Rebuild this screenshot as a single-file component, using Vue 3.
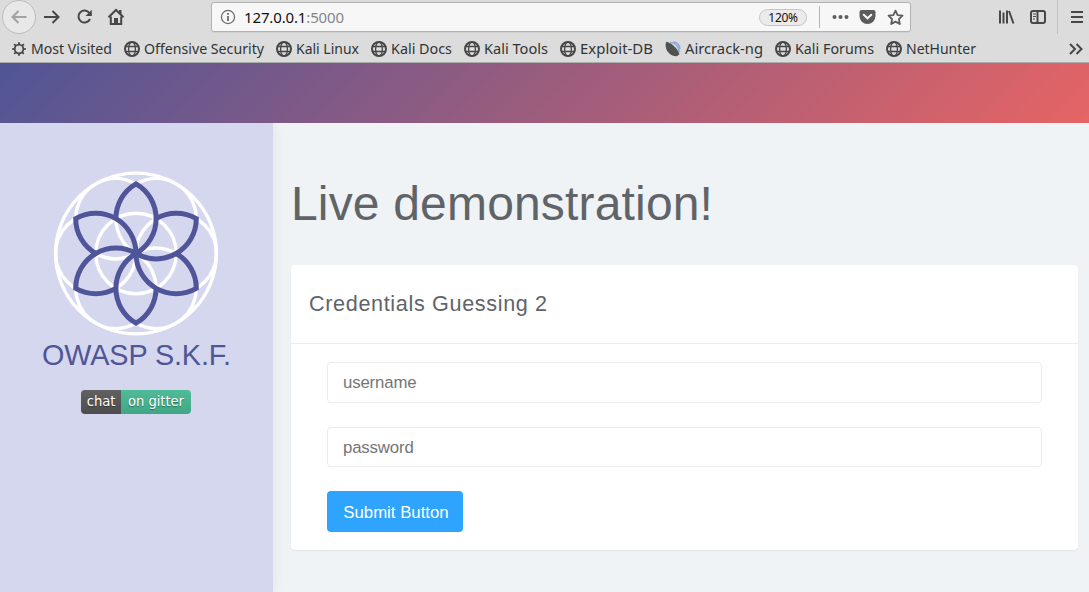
<script setup>
const bookmarks = [
  { label: 'Most Visited', icon: 'gear', width: 113, text: 81 },
  { label: 'Offensive Security', icon: 'globe', width: 152, text: 120 },
  { label: 'Kali Linux', icon: 'globe', width: 95, text: 63 },
  { label: 'Kali Docs', icon: 'globe', width: 93, text: 61 },
  { label: 'Kali Tools', icon: 'globe', width: 96, text: 64 },
  { label: 'Exploit-DB', icon: 'globe', width: 105, text: 73 },
  { label: 'Aircrack-ng', icon: 'dish', width: 110, text: 78 },
  { label: 'Kali Forums', icon: 'globe', width: 111, text: 79 },
  { label: 'NetHunter', icon: 'globe', width: 102, text: 70 },
]
const angles = [0, 60, 120, 180, 240, 300]
const teeth = [0, 45, 90, 135, 180, 225, 270, 315]
</script>

<template>
  <div class="window">
    <header class="chrome">
      <div class="toolbar">
        <div class="nav">
          <span class="back"><svg width="18" height="16" viewBox="0 0 18 16"><path d="M16.500 8H2.500M8.500 2 2.500 8l6 6" /></svg></span>
          <svg class="forward" width="18" height="16" viewBox="0 0 18 16"><path d="M0 8h14M8.500 2l6 6-6 6" /></svg>
          <svg class="reload" width="16" height="16" viewBox="0 0 16 16"><path d="M12.500 4.200A6 6 0 1 0 13 10" /><path class="solid" d="M14.800.8V7H8.500z" /></svg>
          <svg class="home" width="18" height="18" viewBox="0 0 18 18"><path d="M1.500 9.200 9 2l7.500 7.200M3.800 8.500V16h10.400V8.500" /><path class="solid" d="M7 10h4v6H7zM12 2h2.500v5L12 5z" /></svg>
        </div>
        <div class="address">
          <svg class="info" width="16" height="16" viewBox="0 0 16 16"><circle cx="8" cy="8" r="6.600" /><path d="M8 7v5M8 4v1.800" /></svg>
          <span class="url">127.0.0.1<span class="port">:5000</span></span>
          <span class="zoom">120%</span>
          <span class="rule"></span>
          <svg class="dots" width="17" height="6" viewBox="0 0 17 6"><circle cx="2.500" cy="3" r="2" /><circle cx="8.500" cy="3" r="2" /><circle cx="14.500" cy="3" r="2" /></svg>
          <svg class="pocket" width="17" height="16" viewBox="0 0 17 16"><path class="shape" d="M2.500 1h12a2 2 0 0 1 2 2v4a8 8 0 0 1-16 0V3a2 2 0 0 1 2-2z" /><path class="tick" d="m4.700 5.700 3.800 3.600 3.800-3.600" /></svg>
          <svg class="star" width="17" height="17" viewBox="0 0 17 17"><path d="m8.500 1.600 2.100 4.500 4.900.6-3.600 3.400.9 4.900-4.300-2.400L4.200 15l.9-4.900L1.500 6.700l4.900-.6z" /></svg>
        </div>
        <div class="tools">
          <svg class="library" width="17" height="16" viewBox="0 0 17 16"><path d="M2 1.500v13M5.500 3.500v11M9 1.500v13M11 2l4.500 12.500" /></svg>
          <svg class="sidebar-icon" width="16" height="14" viewBox="0 0 16 14"><rect x="1" y="1" width="14" height="12" rx="2" /><path d="M7.500 1v12" /><path class="thin" d="M3 4h3M3 6.500h3M3 9h2" /></svg>
          <span class="divider"></span>
          <svg class="menu" width="14" height="14" viewBox="0 0 14 14"><path d="M1 2h12M1 7h12M1 12h12" /></svg>
        </div>
      </div>
      <nav class="bookmarks">
        <a v-for="b in bookmarks" :key="b.label" :style="{ width: b.width + 'px' }">
          <svg class="mark" width="16" height="16" viewBox="0 0 16 16">
            <g v-if="b.icon === 'globe'" class="globe"><circle cx="8" cy="8" r="7" /><ellipse cx="8" cy="8" rx="3.400" ry="7" /><path d="M1.800 5.500h12.400M1.800 10.500h12.400" /></g>
            <g v-else-if="b.icon === 'gear'" class="gear"><circle cx="8" cy="8" r="4.300" /><path v-for="t in teeth" :key="t" d="M8 3.500V1.200" :transform="`rotate(${t} 8 8)`" /></g>
            <g v-else><path class="beam" d="M5 1.200c5 .3 9 4 9.500 10M8.500.8c3.500.7 6 3.200 6.500 7" /><path class="dish" d="M1.500 1.200C0 5.500 2 13.500 10 14.700c2 .2 3.300-.5 4-1.500C12.500 8 7 2.500 1.500 1.200z" /></g>
          </svg>
          <svg class="label" :width="b.text + 2" height="20"><text x="0" y="15" :textLength="b.text" lengthAdjust="spacingAndGlyphs">{{ b.label }}</text></svg>
        </a>
        <svg class="more" width="14" height="14" viewBox="0 0 14 14"><path d="m1 2 5 5-5 5M7.500 2l5 5-5 5" /></svg>
      </nav>
    </header>

    <div class="banner"></div>
    <div class="page">
      <aside>
        <svg class="logo" width="166" height="166" viewBox="-83 -83.500 166 166">
          <g class="rings"><circle r="80.400" /><circle r="40.200" /><circle v-for="a in angles" :key="a" cx="40.200" r="40.200" :transform="`rotate(${a})`" /></g>
          <g class="petals"><path v-for="a in angles" :key="a" d="M-20.100-34.820A40.200 40.200 0 0 1 0-69.630A40.200 40.200 0 0 1 0 0" :transform="`rotate(${a})`" /></g>
        </svg>
        <div class="brand">OWASP S.K.F.</div>
        <div class="badge"><span class="chat">chat</span><span class="gitter">on gitter</span></div>
      </aside>
      <main>
        <h1>Live demonstration!</h1>
        <section class="card">
          <h2>Credentials Guessing 2</h2>
          <form @submit.prevent>
            <input type="text" placeholder="username">
            <input class="password" type="password" placeholder="password">
            <button>Submit Button</button>
          </form>
        </section>
      </main>
    </div>
  </div>
</template>

<style>
body { margin: 0; overflow: hidden; }
</style>

<style scoped>
* { box-sizing: border-box; }
.window { width: 1089px; height: 592px; overflow: hidden; font-family: "Liberation Sans", Arial, sans-serif; background: #eff3f6; }
svg { display: block; flex: none; fill: none; stroke: #474747; stroke-width: 2; }
.chrome { height: 63px; background: #dcdcdc; border-bottom: 1px solid #aaaeaa; font-family: "Noto Sans", sans-serif; color: #2e3436; }
.toolbar { height: 34px; display: flex; align-items: center; }
.nav { display: flex; align-items: center; width: 211px; flex: none; padding-left: 2px; }
.back { width: 34px; height: 34px; border: 1px solid #bcbcbc; border-radius: 50%; background: #e8e8e8; display: grid; place-items: center; }
.back svg { stroke: #a2a2a2; }
.forward { margin-left: 8px; }
.reload { margin-left: 15px; }
.home { margin-left: 14px; }
.solid { fill: #474747; stroke: none; }
.address { width: 700px; height: 30px; border: 1px solid #b2b2b2; border-radius: 3px; background: #f7f7f7; display: flex; align-items: center; flex: none; padding-left: 8px; box-shadow: 0 1px 1px #d0d0d0; }
.info { stroke: #696969; stroke-width: 1.2; }
.info path { stroke-width: 1.8; }
.url { width: 514px; margin-left: 8px; color: #111; font-size: 15px; letter-spacing: -.14px; line-height: 20px; }
.port { color: #858585; }
.zoom { width: 48px; height: 17px; border: 1px solid #c5c5c5; border-radius: 9px; background: #ebebeb; font-size: 12px; letter-spacing: -.3px; line-height: 15px; text-align: center; color: #111; margin-left: 1px; }
.rule { width: 1px; height: 22px; background: #b4b4b4; margin-left: 12px; }
.dots { fill: #5c5c5c; stroke: none; margin-left: 12px; }
.pocket { margin-left: 10px; }
.shape { fill: #5c5c5c; stroke: none; }
.tick { stroke: #f7f7f7; stroke-linecap: round; }
.star { margin-left: 11px; stroke: #5c5c5c; stroke-width: 1.8; stroke-linejoin: round; }
.tools { display: flex; align-items: center; flex: 1; padding-left: 87px; }
.sidebar-icon { margin-left: 15px; }
.thin { stroke-width: 1; }
.divider { width: 1px; height: 34px; background: #c1c1c1; margin-left: 11px; }
.menu { margin-left: 12px; }
.bookmarks { height: 28px; padding: 2px 0 0 11px; display: flex; align-items: center; }
.bookmarks a { display: flex; align-items: center; gap: 4px; flex: none; }
.label { overflow: visible; }
.label text { fill: #303436; stroke: none; font-size: 15.2px; }
.globe { stroke-width: 1.3; }
.globe circle { stroke-width: 2; }
.gear { stroke-width: 1.8; }
.dish { fill: #50534d; stroke: #363a36; stroke-width: .7; }
.beam { stroke: #8eabda; stroke-width: 1.6; }
.more { margin-left: 81px; }
.banner { height: 60px; background: linear-gradient(135deg, #505596 0%, #e66464 100%); }
.page { display: flex; height: 469px; }
aside { width: 273px; flex: none; background: #d5d7ee; display: flex; flex-direction: column; align-items: center; padding-top: 47px; box-shadow: 0 0 12px rgba(0, 0, 0, .07); clip-path: inset(0 -14px 0 0); }
.logo { margin-right: 1px; }
.rings { stroke: #fff; stroke-width: 3.400; }
.petals { stroke: #50559a; stroke-width: 5; stroke-linejoin: miter; }
.brand { font-size: 28.8px; letter-spacing: -.12px; line-height: 34px; margin-top: 2px; color: #505596; white-space: nowrap; }
.badge { display: flex; margin: 18px 0 0 -1px; height: 24px; border-radius: 4px; overflow: hidden; color: #fff; font: 13.2px/24px "DejaVu Sans", sans-serif; letter-spacing: -.08px; text-shadow: 0 1px 1px rgba(0, 0, 0, .4); }
.badge span { text-align: center; }
.chat { width: 40px; background: linear-gradient(#606060, #4d4d4d); }
.gitter { width: 70px; background: linear-gradient(#50bb98, #40a786); }
main { flex: 1; padding: 53px 11px 0 18px; }
h1 { margin: 0; height: 89px; color: #606468; font-size: 48px; letter-spacing: .17px; line-height: 56px; font-weight: 400; white-space: nowrap; }
.card { height: 285px; background: #fff; border-radius: 4px; box-shadow: 0 1px 2px rgba(0, 0, 0, .06); }
h2 { height: 79px; margin: 0; padding: 0 18px; border-bottom: 1px solid #eaecee; color: #606468; font-size: 21.6px; line-height: 77px; font-weight: 400; letter-spacing: .65px; }
form { padding: 18px 36px; display: flex; flex-direction: column; align-items: flex-start; gap: 24px; }
input, button { font: 16.800px "Liberation Sans", Arial, sans-serif; border-radius: 4px; padding: 0 15px; }
input { width: 100%; height: 41px; border: 1px solid #eaecee; background: #fff; outline: 0; letter-spacing: -.15px; }
.password { height: 40px; padding-top: 1px; }
input::placeholder { color: #757575; opacity: 1; }
button { width: 136px; height: 41px; padding: 2px 14px 0 16px; border: 0; background: #2fa4ff; color: #fff; white-space: nowrap; }
</style>
